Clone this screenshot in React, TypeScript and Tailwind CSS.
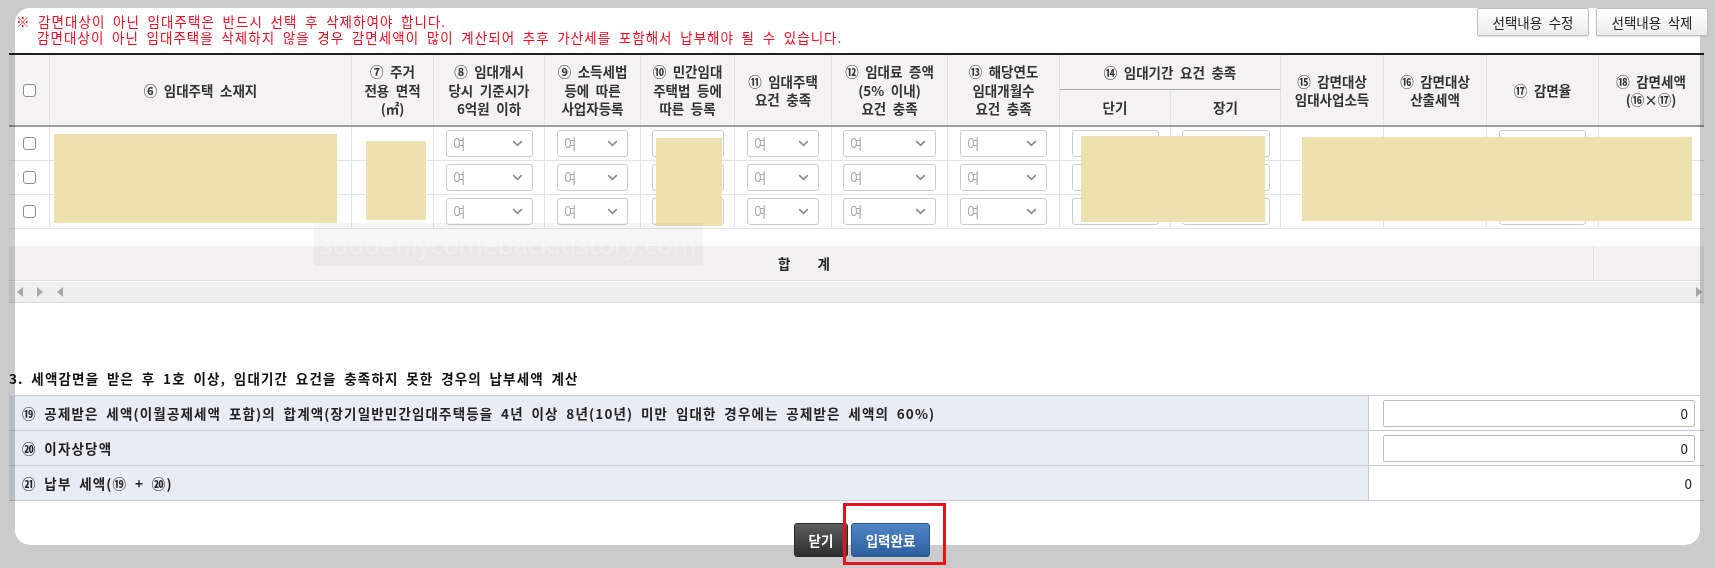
import React from "react";

const COLS =
  "grid grid-cols-[41px_302px_82px_111px_96px_94px_97px_116px_112px_111px_110px_103px_103px_112px_105px]";

const Chevron = () => (
  <svg width="11" height="7" viewBox="0 0 11 7" fill="none">
    <path d="M1.2 1.2 L5.5 5.3 L9.8 1.2" stroke="#8d8d8d" strokeWidth="1.8" />
  </svg>
);

const CheckBox = () => (
  <div className="h-[13px] w-[13px] rounded-[3px] border border-[#8c8c8c] bg-white" />
);

const Select = ({ w, ml }: { w: string; ml: string }) => (
  <div
    className={`${w} ${ml} flex h-[27px] items-center justify-between rounded-[3px] border border-[#cdcdcd] bg-white pl-[6px] pr-[9px] text-[#a9a9a9]`}
  >
    <span>여</span>
    <Chevron />
  </div>
);

const Input = ({ w, ml }: { w: string; ml: string }) => (
  <div className={`${w} ${ml} h-[27px] rounded-[3px] border border-[#cdcdcd] bg-white`} />
);

const Edges = () => (
  <>
    <div className="pointer-events-none absolute inset-y-0 left-0 z-20 w-[6px] bg-[#cbcbcb] mix-blend-multiply" />
    <div className="pointer-events-none absolute inset-y-0 right-0 z-20 w-[4px] bg-[#cbcbcb] mix-blend-multiply" />
  </>
);

type H = { lines: string[] };
const heads: H[] = [
  { lines: ["⑥ 임대주택 소재지"] },
  { lines: ["⑦ 주거", "전용 면적", "(㎡)"] },
  { lines: ["⑧ 임대개시", "당시 기준시가", "6억원 이하"] },
  { lines: ["⑨ 소득세법", "등에 따른", "사업자등록"] },
  { lines: ["⑩ 민간임대", "주택법 등에", "따른 등록"] },
  { lines: ["⑪ 임대주택", "요건 충족"] },
  { lines: ["⑫ 임대료 증액", "(5% 이내)", "요건 충족"] },
  { lines: ["⑬ 해당연도", "임대개월수", "요건 충족"] },
];
const heads2: H[] = [
  { lines: ["⑮ 감면대상", "임대사업소득"] },
  { lines: ["⑯ 감면대상", "산출세액"] },
  { lines: ["⑰ 감면율"] },
  { lines: ["⑱ 감면세액", "(⑯×⑰)"] },
];

const HeadCell = ({ h }: { h: H }) => (
  <div className="row-span-2 flex flex-col items-center justify-center border-r border-[#e1e1e1] text-center leading-[18.5px]">
    {h.lines.map((l, i) => (
      <div key={i}>{l}</div>
    ))}
  </div>
);

const cellCls = "flex h-full items-center border-r border-[#e4e4e4]";

const DataRow = () => (
  <div className={`${COLS} h-[34px] border-b border-[#e4e4e4]`}>
    <div className={`${cellCls} justify-center`}>
      <CheckBox />
    </div>
    <div className={cellCls} />
    <div className={cellCls} />
    <div className={cellCls}>
      <Select w="w-[87px]" ml="ml-[12px]" />
    </div>
    <div className={cellCls}>
      <Select w="w-[71px]" ml="ml-[12px]" />
    </div>
    <div className={cellCls}>
      <Input w="w-[72px]" ml="ml-[11px]" />
    </div>
    <div className={cellCls}>
      <Select w="w-[72px]" ml="ml-[12px]" />
    </div>
    <div className={cellCls}>
      <Select w="w-[93px]" ml="ml-[11px]" />
    </div>
    <div className={cellCls}>
      <Select w="w-[87px]" ml="ml-[12px]" />
    </div>
    <div className={cellCls}>
      <Input w="w-[87px]" ml="ml-[12px]" />
    </div>
    <div className={cellCls}>
      <Input w="w-[88px]" ml="ml-[11px]" />
    </div>
    <div className={cellCls} />
    <div className={cellCls} />
    <div className={cellCls}>
      <Input w="w-[87px]" ml="ml-[12px]" />
    </div>
    <div className="h-full" />
  </div>
);

const Tri = ({ dir }: { dir: "l" | "r" }) => (
  <svg width="6" height="10" viewBox="0 0 6 10">
    {dir === "l" ? (
      <polygon points="6,0 6,10 0,5" fill="#a6a6a6" />
    ) : (
      <polygon points="0,0 0,10 6,5" fill="#a6a6a6" />
    )}
  </svg>
);

const BtnGray = ({ label }: { label: string }) => (
  <div className="flex h-[28px] w-[112px] items-center justify-center rounded-[2px] border border-[#bdbdbd] bg-gradient-to-b from-white to-[#ececec] text-[#222] shadow-[0_1px_1px_rgba(0,0,0,0.12)]">
    {label}
  </div>
);

export default function App() {
  return (
    <div className="relative h-[568px] w-[1715px] overflow-hidden bg-[#cbcbcb] font-['Noto_Sans_CJK_KR','Noto_Sans',sans-serif] text-[13.5px] text-[#222] [word-spacing:3.5px]">
      <div className="relative ml-[15px] mt-[16px] h-[537px] w-[1685px] rounded-[15px] bg-white">
        <div className="-ml-[6px] -mt-[8px] flex w-[1695px] flex-col">
          {/* top bar */}
          <div className="flex h-[45px] items-start justify-between">
            <div className="mt-[5px] pl-[7px] leading-[16px] tracking-[1.05px] text-[#ff0a22]">
              <div className="h-[16px]">※ 감면대상이 아닌 임대주택은 반드시 선택 후 삭제하여야 합니다.</div>
              <div className="h-[16px] pl-[21px]">
                감면대상이 아닌 임대주택을 삭제하지 않을 경우 감면세액이 많이 계산되어 추후 가산세를 포함해서 납부해야 될 수 있습니다.
              </div>
            </div>
            <div className="-mr-[4px] flex gap-[7px]">
              <BtnGray label="선택내용 수정" />
              <BtnGray label="선택내용 삭제" />
            </div>
          </div>

          {/* main table */}
          <div className="relative bg-white">
            <Edges />
            <div
              className={`${COLS} grid-rows-[35px_35px] border-y-2 border-t-[#1e1e1e] border-b-[#9c9c9c] bg-[#f4f3f1] font-bold text-[#333]`}
            >
              <div className="row-span-2 flex items-center justify-center border-r border-[#e1e1e1]">
                <CheckBox />
              </div>
              {heads.map((h, i) => (
                <HeadCell key={i} h={h} />
              ))}
              <div className="col-span-2 flex items-center justify-center border-b border-r border-b-[#a8a8a8] border-r-[#e1e1e1]">
                ⑭ 임대기간 요건 충족
              </div>
              {heads2.map((h, i) => (
                <HeadCell key={i} h={h} />
              ))}
              <div className="col-start-10 row-start-2 flex items-center justify-center border-r border-[#e1e1e1]">
                단기
              </div>
              <div className="col-start-11 row-start-2 flex items-center justify-center border-r border-[#e1e1e1]">
                장기
              </div>
            </div>
            <div className="relative">
              <DataRow />
              <DataRow />
              <DataRow />
              {/* redaction blocks */}
              <div className="absolute left-[45px] top-[7px] h-[89px] w-[283px] bg-[#eee1b0]" />
              <div className="absolute left-[357px] top-[14px] h-[79px] w-[60px] bg-[#eee1b0]" />
              <div className="absolute left-[647px] top-[11px] h-[88px] w-[66px] bg-[#eee1b0]" />
              <div className="absolute left-[1072px] top-[9px] h-[86px] w-[184px] bg-[#eee1b0]" />
              <div className="absolute left-[1293px] top-[10px] h-[84px] w-[390px] bg-[#eee1b0]" />
            </div>
          </div>

          <div className="h-[17px]" />

          {/* footer + scrollbar */}
          <div className="relative">
            <Edges />
            <div className="grid h-[35px] grid-cols-[1584px_111px] border-b border-[#dcdcdc] bg-[#f3f2f0] font-bold text-[#222]">
              <div className="flex items-center justify-center gap-[27px] pl-[6px]">
                <span>합</span>
                <span>계</span>
              </div>
              <div className="border-l border-[#e2e2e2]" />
            </div>
            <div className="h-px bg-white" />
            <div className="flex h-[21px] items-center border-b border-[#d6d6d6] bg-[#efefef] pl-[8px] pr-[2px]">
              <div className="flex items-center gap-[14px]">
                <Tri dir="l" />
                <Tri dir="r" />
                <Tri dir="l" />
              </div>
              <div className="ml-auto">
                <Tri dir="r" />
              </div>
            </div>
          </div>

          <div className="h-[65px]" />

          <div className="h-[20px] font-bold leading-[20px] tracking-[1.15px] text-[#111]">
            3. 세액감면을 받은 후 1호 이상, 임대기간 요건을 충족하지 못한 경우의 납부세액 계산
          </div>

          <div className="h-[7px]" />

          {/* bottom table */}
          <div className="relative border-t border-[#c5cbd5]">
            <Edges />
            <div className="grid h-[35px] grid-cols-[1360px_335px] border-b border-[#c5cbd5]">
              <div className="flex items-center border-r border-[#c5cbd5] bg-[#e8ecf5] pl-[13px] font-bold tracking-[1.15px]">
                ⑲ 공제받은 세액(이월공제세액 포함)의 합계액(장기일반민간임대주택등을 4년 이상 8년(10년) 미만 임대한 경우에는 공제받은 세액의 60%)
              </div>
              <div className="flex items-center bg-white">
                <div className="ml-[14px] flex h-[27px] w-[312px] items-center justify-end rounded-[2px] border border-[#bcbcbc] pr-[6px]">
                  0
                </div>
              </div>
            </div>
            <div className="grid h-[35px] grid-cols-[1360px_335px] border-b border-[#c5cbd5]">
              <div className="flex items-center border-r border-[#c5cbd5] bg-[#e8ecf5] pl-[13px] font-bold tracking-[1.15px]">
                ⑳ 이자상당액
              </div>
              <div className="flex items-center bg-white">
                <div className="ml-[14px] flex h-[27px] w-[312px] items-center justify-end rounded-[2px] border border-[#bcbcbc] pr-[6px]">
                  0
                </div>
              </div>
            </div>
            <div className="grid h-[35px] grid-cols-[1360px_335px] border-b border-[#c5cbd5]">
              <div className="flex items-center border-r border-[#c5cbd5] bg-[#e8ecf5] pl-[13px] font-bold tracking-[1.15px]">
                ㉑ 납부 세액(⑲ + ⑳)
              </div>
              <div className="flex items-center justify-end bg-white pr-[12px]">0</div>
            </div>
          </div>

          <div className="h-[22px]" />

          {/* action buttons */}
          <div className="flex justify-center gap-[3px] pl-[11px] font-bold text-white">
            <div className="flex h-[34px] w-[54px] items-center justify-center rounded-[3px] border border-[#2a2a2a] bg-gradient-to-b from-[#5c5c5c] to-[#2f2f2f]">
              닫기
            </div>
            <div className="flex h-[34px] w-[79px] items-center justify-center rounded-[3px] border border-[#2b578f] bg-gradient-to-b from-[#4f86c8] to-[#2e5f9f]">
              입력완료
            </div>
          </div>
        </div>
      </div>

      {/* watermark */}
      <div className="pointer-events-none absolute left-[314px] top-[223px] flex h-[43px] w-[389px] items-center justify-center overflow-hidden bg-black/[0.035] font-['Open_Sans',sans-serif] text-[26px] text-white/30 [word-spacing:0]">
        suddenlycomeback.tistory.com
      </div>

      {/* red annotation */}
      <div className="pointer-events-none absolute left-[843px] top-[503px] h-[62px] w-[103px] border-[3px] border-[#e3141c]" />
    </div>
  );
}
